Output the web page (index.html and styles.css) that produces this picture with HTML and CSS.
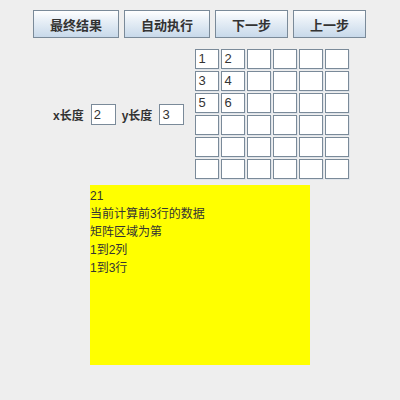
FILE: index.html
```html
<!DOCTYPE html>
<html>
<head>
<meta charset="utf-8">
<link rel="stylesheet" href="styles.css">
</head>
<body>
<div class="toolbar">
  <button class="btn wide">最终结果</button>
  <button class="btn wide">自动执行</button>
  <button class="btn">下一步</button>
  <button class="btn">上一步</button>
</div>
<div class="middle">
  <div class="params">
    <span class="lbl">x长度</span>
    <span class="field">2</span>
    <span class="lbl ylbl">y长度</span>
    <span class="field">3</span>
  </div>
  <div class="grid">
    <span class="cell">1</span><span class="cell">2</span><span class="cell"></span><span class="cell"></span><span class="cell"></span><span class="cell"></span>
    <span class="cell">3</span><span class="cell">4</span><span class="cell"></span><span class="cell"></span><span class="cell"></span><span class="cell"></span>
    <span class="cell">5</span><span class="cell">6</span><span class="cell"></span><span class="cell"></span><span class="cell"></span><span class="cell"></span>
    <span class="cell"></span><span class="cell"></span><span class="cell"></span><span class="cell"></span><span class="cell"></span><span class="cell"></span>
    <span class="cell"></span><span class="cell"></span><span class="cell"></span><span class="cell"></span><span class="cell"></span><span class="cell"></span>
    <span class="cell"></span><span class="cell"></span><span class="cell"></span><span class="cell"></span><span class="cell"></span><span class="cell"></span>
  </div>
</div>
<div class="output">
  <div>21</div>
  <div>当前计算前3行的数据</div>
  <div>矩阵区域为第</div>
  <div>1到2列</div>
  <div>1到3行</div>
</div>
</body>
</html>
```
FILE: styles.css
```css
html, body {
  margin: 0;
  padding: 0;
  background: #eeeeee;
  width: 400px;
  height: 400px;
  overflow: hidden;
  font-family: "Liberation Sans", "Noto Sans CJK SC", sans-serif;
  color: #333333;
}
.toolbar {
  display: flex;
  gap: 5px;
  padding-left: 33px;
  padding-top: 10px;
}
.btn {
  box-sizing: border-box;
  height: 28px;
  width: 73px;
  border: 1px solid #7a8a99;
  border-radius: 0;
  background: linear-gradient(#ffffff 0%, #e9f0f7 35%, #c8d9ea 100%);
  font-family: "Liberation Sans", "Noto Sans CJK SC", sans-serif;
  font-weight: bold;
  font-size: 13px;
  color: #333333;
  padding: 0;
  margin: 0;
}
.btn.wide {
  width: 86px;
}
.middle {
  display: flex;
  align-items: center;
  margin-top: 11px;
  padding-left: 53px;
}
.params {
  display: flex;
  align-items: center;
}
.lbl {
  font-weight: bold;
  font-size: 12px;
  color: #333333;
  margin-right: 7px;
}
.ylbl {
  margin-left: 6px;
}
.field {
  box-sizing: border-box;
  width: 25px;
  height: 21px;
  background: #ffffff;
  border: 1px solid #7a8a99;
  font-size: 13px;
  line-height: 19px;
  padding-left: 2px;
  color: #333333;
}
.grid {
  display: grid;
  grid-template-columns: repeat(6, 24px);
  grid-auto-rows: 20px;
  gap: 2px;
  margin-left: 11px;
}
.cell {
  box-sizing: border-box;
  background: #ffffff;
  border: 1px solid #7a8a99;
  box-shadow: 1px 1px 0 #dfe4ea;
  font-size: 13px;
  line-height: 18px;
  padding-left: 2px;
  color: #333333;
}
.output {
  box-sizing: border-box;
  margin-top: 6px;
  margin-left: 90px;
  width: 220px;
  height: 180px;
  background: #ffff00;
  font-size: 12px;
  line-height: 18px;
  padding-top: 2px;
  color: #333333;
}
```
